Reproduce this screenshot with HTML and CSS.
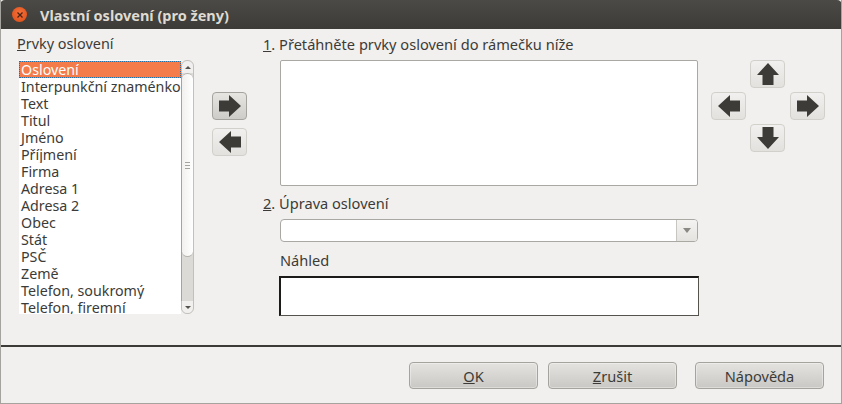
FILE: index.html
```html
<!DOCTYPE html>
<html lang="cs">
<head>
    <meta charset="UTF-8">
    <title>Vlastní oslovení (pro ženy)</title>
    <link rel="stylesheet" href="styles.css">
</head>
<body>
    <div class="window">
        <div class="titlebar">
            <span class="close">
                <svg width="8" height="8" viewBox="0 0 8 8"><path d="M1.5 1.5l5 5M6.500 1.500l-5 5" stroke="#4a2414" stroke-width="1.3" fill="none"/></svg>
            </span>
            <span class="title">Vlastní oslovení (pro ženy)</span>
        </div>

        <div class="content">
            <div class="col-list">
                <div class="label label-list"><u>P</u>rvky oslovení</div>
                <div class="listbox">
                    <div class="items">
                        <div class="item selected">Oslovení</div>
                        <div class="item">Interpunkční znaménko</div>
                        <div class="item">Text</div>
                        <div class="item">Titul</div>
                        <div class="item">Jméno</div>
                        <div class="item">Příjmení</div>
                        <div class="item">Firma</div>
                        <div class="item">Adresa 1</div>
                        <div class="item">Adresa 2</div>
                        <div class="item">Obec</div>
                        <div class="item">Stát</div>
                        <div class="item">PSČ</div>
                        <div class="item">Země</div>
                        <div class="item">Telefon, soukromý</div>
                        <div class="item">Telefon, firemní</div>
                    </div>
                    <div class="scrollbar">
                        <div class="step step-up"><svg width="6" height="3" viewBox="0 0 6 3"><path d="M3 0l3 3H0z" fill="#55534e"/></svg></div>
                        <div class="track">
                            <div class="thumb"><span class="grip"></span></div>
                        </div>
                        <div class="step step-down"><svg width="6" height="3" viewBox="0 0 6 3"><path d="M0 0h6L3 3z" fill="#55534e"/></svg></div>
                    </div>
                </div>
            </div>

            <div class="col-move">
                <button class="arrow-btn hot"><svg viewBox="0 0 22 22"><path class="arrow" d="M0 5.500h10V0l12 11-12 11v-5.500H0z"/></svg></button>
                <button class="arrow-btn"><svg viewBox="0 0 22 22"><path class="arrow" d="M22 5.500H12V0L0 11l12 11v-5.500h10z"/></svg></button>
            </div>

            <div class="col-main">
                <div class="label"><u>1</u>. Přetáhněte prvky oslovení do rámečku níže</div>
                <div class="drop-row">
                    <div class="dropbox"></div>
                    <div class="pad">
                        <button class="arrow-btn pad-up"><svg viewBox="0 0 22 22"><path class="arrow" d="M5.500 22V12H0L11 0l11 12h-5.500v10z"/></svg></button>
                        <button class="arrow-btn pad-left"><svg viewBox="0 0 22 22"><path class="arrow" d="M22 5.500H12V0L0 11l12 11v-5.500h10z"/></svg></button>
                        <button class="arrow-btn pad-right"><svg viewBox="0 0 22 22"><path class="arrow" d="M0 5.500h10V0l12 11-12 11v-5.500H0z"/></svg></button>
                        <button class="arrow-btn pad-down"><svg viewBox="0 0 22 22"><path class="arrow" d="M5.500 0v10H0l11 12 11-12h-5.500V0z"/></svg></button>
                    </div>
                </div>
                <div class="label label-edit"><u>2</u>. Úprava oslovení</div>
                <div class="indent">
                    <div class="combo">
                        <div class="combo-text"></div>
                        <div class="combo-btn"><svg width="8" height="5" viewBox="0 0 8 5"><path d="M0 0h8L4 5z" fill="#8a8883"/></svg></div>
                    </div>
                    <div class="label label-preview">Náhled</div>
                    <div class="preview"></div>
                </div>
            </div>
        </div>

        <div class="separator"></div>

        <div class="footer">
            <button class="btn"><u>O</u>K</button>
            <button class="btn"><u>Z</u>rušit</button>
            <button class="btn btn-help">Nápověda</button>
        </div>
    </div>
</body>
</html>
```

FILE: styles.css
```css
html, body { margin: 0; padding: 0; }
body { font-family: "Noto Sans", "Open Sans", sans-serif; font-size: 14.6px; color: #3c3b37; background: #f0efed; }

.window { width: 842px; height: 404px; box-sizing: border-box; display: flex; flex-direction: column; background: #f1f0ee; border: 1px solid #a5a39e; border-top: 0; overflow: hidden; }

.titlebar { height: 29px; margin: 0 -1px; flex: none; display: flex; align-items: center; background: linear-gradient(#4c4a46, #3c3b37); border-radius: 5px 5px 0 0; }
.close { width: 15px; height: 15px; margin-left: 12px; border-radius: 50%; background: radial-gradient(circle at 50% 40%, #f5703a, #dc4c16); display: flex; align-items: center; justify-content: center; }
.title { margin-left: 13px; font-weight: bold; font-size: 14.5px; color: #dfdbd2; }

.content { height: 316px; flex: none; display: flex; }

.label { height: 20px; line-height: 20px; white-space: nowrap; }
.label-list { margin-left: -2px; font-size: 14.4px; }

.col-list { width: 176px; margin-left: 18px; padding-top: 5px; }
.listbox { display: flex; height: 254px; margin-top: 6px; }
.items { width: 162px; padding-top: 1px; box-sizing: border-box; background: #fff; overflow: hidden; font-size: 14.25px; }
.item { height: 17px; line-height: 17px; padding-left: 2px; white-space: nowrap; overflow: hidden; }
.item.selected { background: #f37c4a; color: #fff; outline: 1px dotted #2a6f9e; outline-offset: -1px; }

.scrollbar { width: 13px; box-sizing: border-box; display: flex; flex-direction: column; background: #dcdad6; border: 1px solid #c2c0bb; border-radius: 6px; }
.step { height: 12px; flex: none; display: flex; align-items: center; justify-content: center; background: #f1f0ee; }
.step-up { border-radius: 6px 6px 0 0; }
.step-down { border-radius: 0 0 6px 6px; }
.track { flex: 1; border-left: 1px solid #a5a39e; margin-left: -1px; }
.thumb { height: 184px; box-sizing: border-box; display: flex; align-items: center; justify-content: center; background: linear-gradient(90deg, #f1f0ee, #fff); border: 1px solid #b5b3ae; border-left: 0; border-right: 0; border-radius: 6px; }
.grip { width: 5px; height: 7px; background: repeating-linear-gradient(#a5a39e 0 1px, transparent 1px 3px); }

.arrow-btn { width: 35px; height: 28px; padding: 0; display: flex; align-items: center; justify-content: center; background: linear-gradient(#f1f0ee, #e2e1de); border: 1px solid #d2d0cb; border-radius: 4px; }
.arrow-btn svg { width: 22px; height: 22px; }
.arrow { fill: #3c3b37; }
.arrow-btn.hot { background: linear-gradient(#e6e5e2, #cdccc8); border-color: #a5a39e; }

.col-move { width: 35px; margin-left: 17px; padding-top: 63px; display: flex; flex-direction: column; gap: 8px; }

.col-main { margin-left: 16px; padding-top: 5px; }
.drop-row { display: flex; margin-top: 6px; margin-left: 17px; }
.dropbox { width: 416px; height: 124px; background: #fff; border: 1px solid #aaa8a3; border-radius: 2px; }
.pad { width: 114px; height: 100px; margin-left: 13px; display: grid; grid-template-columns: 39px 35px 40px; grid-template-rows: repeat(3, 28px); gap: 4px 0; }
.pad .pad-up { grid-column: 2; grid-row: 1; }
.pad .pad-left { grid-column: 1; grid-row: 2; }
.pad .pad-right { grid-column: 3; grid-row: 2; justify-self: end; }
.pad .pad-down { grid-column: 2; grid-row: 3; }

.label-edit { margin-top: 7px; }
.indent { margin-left: 17px; width: 418px; }
.combo { display: flex; height: 21px; margin-top: 6px; background: #fff; border: 1px solid #aaa8a3; border-radius: 4px; overflow: hidden; }
.combo-text { flex: 1; }
.combo-btn { width: 20px; display: flex; align-items: center; justify-content: center; background: linear-gradient(#f4f3f1, #e4e3e0); border-left: 1px solid #c8c6c1; }
.label-preview { margin-top: 8px; }
.preview { height: 37px; margin: 6px -1px 0; background: #fff; border: 1px solid #55534e; border-top: 2px solid #1c1b19; border-left: 2px solid #1c1b19; }

.separator { height: 2px; flex: none; background: #3c3b37; }

.footer { flex: 1; display: flex; padding: 15px 0 0 408px; }
.btn { flex: none; width: 129px; height: 27px; padding: 0; font: inherit; color: #3c3b37; background: linear-gradient(#e4e3e0, #c9c8c4); border: 1px solid #a5a39e; border-radius: 4px; box-shadow: inset 0 0 0 1px rgba(255, 255, 255, .35); }
.btn + .btn { margin-left: 10px; }
.btn + .btn-help { margin-left: 18px; }
```
